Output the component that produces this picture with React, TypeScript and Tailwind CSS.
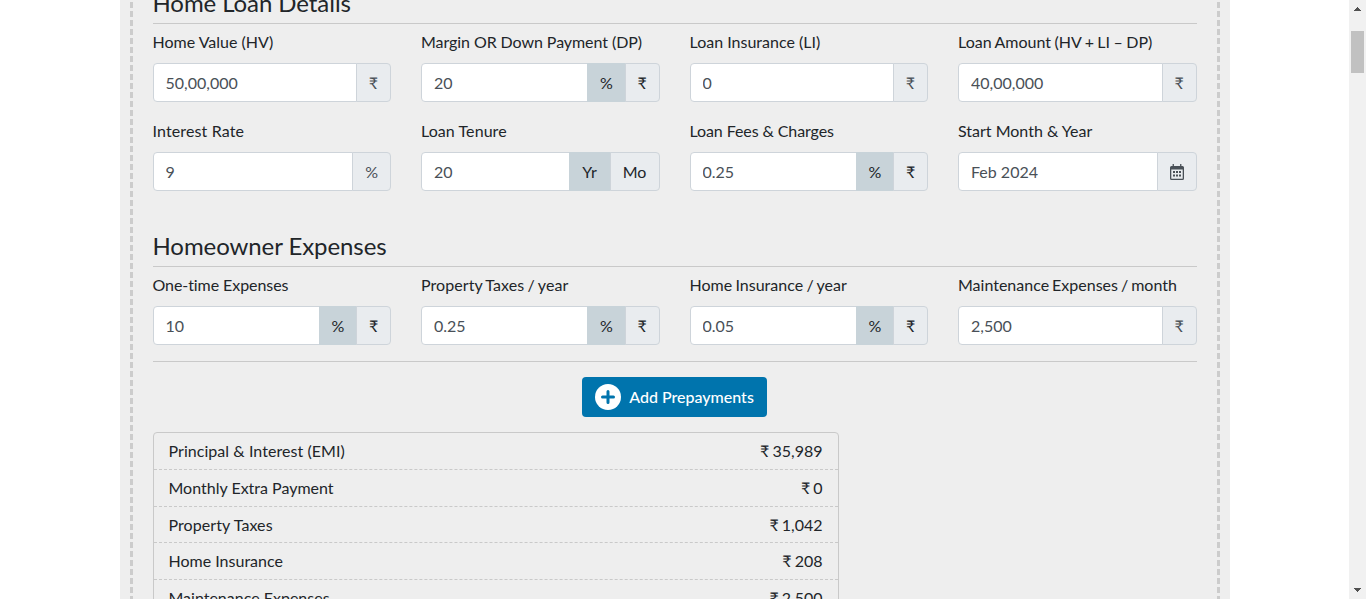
import type { ReactNode } from "react";

type Addon = { label: ReactNode; kind: "static" | "active" | "option"; size?: string };
type FieldProps = { label: string; value: string; addons: Addon[]; tracking?: string };

function CalendarIcon() {
  return (
    <svg className="h-4 w-[14px]" viewBox="0 0 14 16" fill="currentColor">
      <path
        fillRule="evenodd"
        d="M2.6 0h1.3v2h6.200V0h1.300v2H12.500A1.500 1.500 0 0 1 14 3.500v11a1.500 1.500 0 0 1-1.500 1.500h-11A1.500 1.500 0 0 1 0 14.500v-11A1.500 1.500 0 0 1 1.500 2h1.100zM1.300 5.500v8.700q0 .5.5.5h10.400q.5 0 .5-.5V5.500z"
      />
      <path d="M3 7h2v2H3zM6 7h2v2H6zM9 7h2v2H9zM3 10.500h2v2H3zM6 10.500h2v2H6zM9 10.500h2v2H9z" />
    </svg>
  );
}

function PlusIcon() {
  return (
    <svg className="size-[26px]" viewBox="0 0 26 26">
      <circle cx="13" cy="13" r="13" fill="#fff" />
      <path d="M13 7.500v11M7.500 13h11" stroke="#0074ad" strokeWidth="3" strokeLinecap="round" />
    </svg>
  );
}

const rupee: Addon[] = [{ label: "₹", kind: "static", size: "w-[35.3px]" }];
const rupeeNarrow: Addon[] = [{ label: "₹", kind: "static", size: "w-[34.900px]" }];
const percent: Addon[] = [{ label: "%", kind: "static" }];
const percentOrRupee: Addon[] = [
  { label: "%", kind: "active", size: "w-[38.500px]" },
  { label: "₹", kind: "option", size: "w-[34.900px]" },
];
const tenure: Addon[] = [
  { label: "Yr", kind: "active", size: "w-[42px]" },
  { label: "Mo", kind: "option", size: "w-[50px]" },
];
const calendar: Addon[] = [{ label: <CalendarIcon />, kind: "static", size: "w-[40px]" }];

const loanFields: FieldProps[] = [
  { label: "Home Value (HV)", value: "50,00,000", addons: rupee },
  { label: "Margin OR Down Payment (DP)", value: "20", addons: percentOrRupee, tracking: "tracking-[-0.07px]" },
  { label: "Loan Insurance (LI)", value: "0", addons: rupee },
  { label: "Loan Amount (HV + LI – DP)", value: "40,00,000", addons: rupeeNarrow, tracking: "[word-spacing:-0.65px]" },
  { label: "Interest Rate", value: "9", addons: percent, tracking: "tracking-[0.13px]" },
  { label: "Loan Tenure", value: "20", addons: tenure, tracking: "tracking-[0.07px]" },
  { label: "Loan Fees & Charges", value: "0.25", addons: percentOrRupee, tracking: "tracking-[-0.1px]" },
  { label: "Start Month & Year", value: "Feb 2024", addons: calendar },
];

const expenseFields: FieldProps[] = [
  { label: "One-time Expenses", value: "10", addons: percentOrRupee, tracking: "tracking-[-0.07px]" },
  { label: "Property Taxes / year", value: "0.25", addons: percentOrRupee, tracking: "tracking-[0.07px] [word-spacing:-0.8px]" },
  { label: "Home Insurance / year", value: "0.05", addons: percentOrRupee, tracking: "[word-spacing:-0.8px]" },
  { label: "Maintenance Expenses / month", value: "2,500", addons: rupeeNarrow, tracking: "[word-spacing:-1.1px]" },
];

const summary = [
  { name: "Principal & Interest (EMI)", amount: "₹ 35,989", tracking: "tracking-[0.05px]" },
  { name: "Monthly Extra Payment", amount: "₹ 0", tracking: "" },
  { name: "Property Taxes", amount: "₹ 1,042", tracking: "tracking-[0.08px]" },
  { name: "Home Insurance", amount: "₹ 208", tracking: "" },
  { name: "Maintenance Expenses", amount: "₹ 2,500", tracking: "" },
];

const addonStyles = {
  static: "border-[#ced4da] bg-[#e9ecef] text-[#495057]",
  active: "border-[#c8d3d9] bg-[#c8d3d9] text-[#212529]",
  option: "border-[#ced4da] bg-[#e9ecef] text-[#212529]",
};

function Field({ label, value, addons, tracking = "" }: FieldProps) {
  return (
    <div className="min-w-0">
      <label className={`mb-[9px] block whitespace-nowrap leading-6 ${tracking}`}>{label}</label>
      <div className="flex h-[39px]">
        <input
          readOnly
          value={value}
          className="w-0 min-w-0 flex-1 rounded-l border border-[#ced4da] bg-white px-3 text-[#495057] outline-none"
        />
        {addons.map((a, i) => (
          <span
            key={i}
            className={`-ml-px flex items-center justify-center border last:rounded-r ${a.size ?? "px-3"} ${addonStyles[a.kind]}`}
          >
            {a.label}
          </span>
        ))}
      </div>
    </div>
  );
}

function Section({ title, fields }: { title: string; fields: FieldProps[] }) {
  return (
    <section>
      <h4 className="h-[38px] border-b border-[#c9c9c9] text-2xl leading-[33px] tracking-[-0.08px]">{title}</h4>
      <div className="mt-[6px] grid grid-cols-4 gap-x-[30px] gap-y-[17px]">
        {fields.map((f) => (
          <Field key={f.label} {...f} />
        ))}
      </div>
    </section>
  );
}

function DashedEdge() {
  return (
    <div className="w-[3px] shrink-0 bg-[repeating-linear-gradient(to_bottom,#eee_0px,#eee_2px,#ccc_2px,#ccc_8px,#eee_8px,#eee_9px)]" />
  );
}

function Scrollbar() {
  return (
    <div className="flex w-[17px] shrink-0 flex-col items-center bg-[#f1f1f1]">
      <svg className="mt-[6px] h-[6px] w-[7px]" viewBox="0 0 7 6" fill="#505050" shapeRendering="crispEdges">
        <path d="M3 1h1v1h1v1h1v1h1v1H0V4h1V3h1V2h1z" />
      </svg>
      <div className="mt-[19px] h-[42px] w-[13px] bg-[#c1c1c1]" />
      <svg className="mb-[6px] mt-auto h-[6px] w-[7px]" viewBox="0 0 7 6" fill="#505050" shapeRendering="crispEdges">
        <path d="M0 1h7v1H6v1H5v1H4v1H3V4H2V3H1V2H0z" />
      </svg>
    </div>
  );
}

export default function App() {
  return (
    <div className="flex h-[599px] overflow-hidden bg-white font-['Lato','Noto_Sans',sans-serif] text-base text-[#212529]">
      <main className="flex flex-1 justify-center overflow-hidden">
        <div className="flex w-[1110px] bg-[#eee] px-[10px]">
          <DashedEdge />
          <div className="min-w-0 flex-1 px-5">
            <div className="-mt-[14px]">
              <Section title="Home Loan Details" fields={loanFields} />
            </div>
            <div className="mt-[38px] border-b border-[#c9c9c9] pb-4">
              <Section title="Homeowner Expenses" fields={expenseFields} />
            </div>
            <div className="mt-[15px] flex justify-center">
              <button className="flex h-10 items-center gap-2 rounded bg-[#0074ad] px-[13px] text-white">
                <PlusIcon />
                <span className="font-medium">Add Prepayments</span>
              </button>
            </div>
            <div className="mt-[15px] w-[686px] rounded border border-[#c9c9c9]">
              {summary.map(({ name, amount, tracking }) => (
                <div
                  key={name}
                  className="flex h-[36.8px] items-center justify-between border-b border-dashed border-[#c9c9c9] px-[15px] pt-[0.3px]"
                >
                  <span className={tracking}>{name}</span>
                  <span className="[word-spacing:-1px]">{amount}</span>
                </div>
              ))}
            </div>
          </div>
          <DashedEdge />
        </div>
      </main>
      <Scrollbar />
    </div>
  );
}
